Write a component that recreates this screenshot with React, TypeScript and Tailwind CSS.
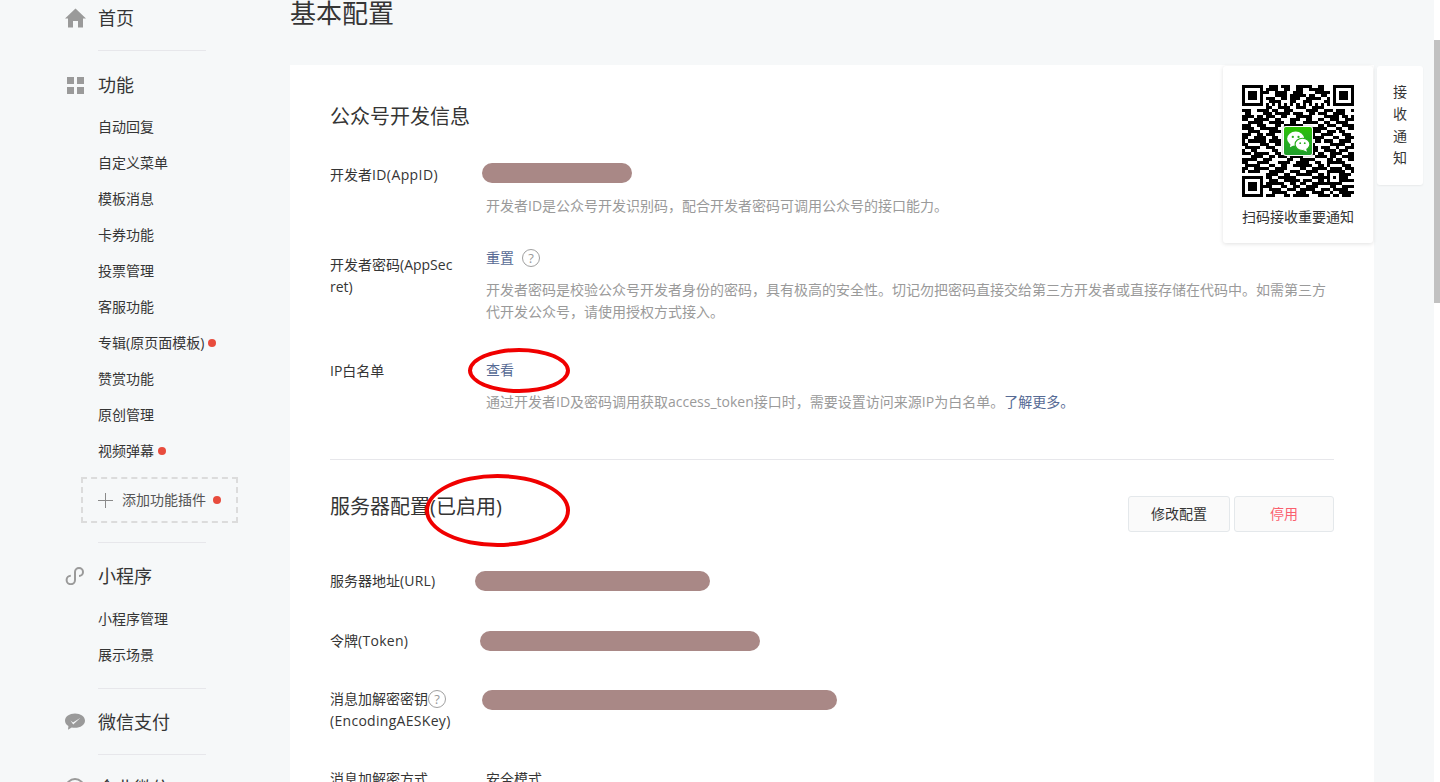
const FONT = 'font-["Open_Sans","Noto_Sans_CJK_SC",sans-serif]';

// rough copy of the QR pattern, 37 modules square
const QR_ROWS = [
  '1111111001110111001111100110001111111',
  '1000001011110011001100111110001000001',
  '1011101110011110011100001111101011101',
  '1011101000011110111110110011001011101',
  '1011101011100110111001111100101011101',
  '1000001001111000110011100001101000001',
  '1111111010101010101010101010101111111',
  '0000000011001111001110011110000000000',
  '1110011110110011100001111001110111001',
  '0110000111011111011100110111001111000',
  '1111011011100110001111100001111101101',
  '1100111110011000111001100110011100111',
  '0011111001111100110011111001100111100',
  '1110011100011011111100000110111001111',
  '1111001111110000000000011111000110011',
  '0011110001111000000000111100111011000',
  '1110011011100000000000010011110001110',
  '1100111100110000000000111110001100111',
  '1011111101111000000000001101110011110',
  '1100001110011000000000110000011111001',
  '0111110011100000000000011011100100111',
  '1001100000110000000000111001111011100',
  '1110111110011000000000110110011110011',
  '0001111001101110111100001111011001111',
  '1111100111000001100111110000110110011',
  '1100011110001111001111001100111111000',
  '0111110001100110011111100110100001110',
  '1100111110011110000110011111011110111',
  '1011110001111100111001111000111111001',
  '0000000011110011001111100110100011110',
  '1111111011001111110000011111101011100',
  '1000001001110011111011100110100011111',
  '1011101011111100110110011111111110000',
  '1011101111000110011001111000011001111',
  '1011101001111001110111110011101111100',
  '1000001000111110001110011110010011111',
  '1111111011100011011111000111101101110',
];

function QrCode() {
  return (
    <div className="relative w-[112px] h-[112px]">
      <svg width="112" height="112" viewBox="0 0 37 37" shapeRendering="crispEdges">
        {QR_ROWS.map((row, y) =>
          row.split('').map((c, x) =>
            c === '1' ? <rect key={`${x}-${y}`} x={x} y={y} width="1" height="1" fill="#000" /> : null
          )
        )}
      </svg>
      <div className="absolute left-[41px] top-[41px] w-[30px] h-[30px] rounded-[3px] bg-white shadow-[0_0_2px_rgba(0,0,0,0.4)] flex items-center justify-center">
        <div className="w-[28px] h-[28px] rounded-[2px] bg-gradient-to-b from-[#2dc100] to-[#1f9e2a] flex items-center justify-center">
          <svg width="25" height="23" viewBox="0 0 22 20">
            <ellipse cx="8.5" cy="7.5" rx="7.5" ry="6.2" fill="#fff" />
            <path d="M4 11.5 L3.5 15 L7.5 13 Z" fill="#fff" />
            <ellipse cx="14.5" cy="12.5" rx="6.5" ry="5.4" fill="#fff" stroke="#28b01c" />
            <path d="M17.5 16 L18.5 19 L15 17.5 Z" fill="#fff" />
            <circle cx="6" cy="6" r="1" fill="#28b01c" />
            <circle cx="11" cy="6" r="1" fill="#28b01c" />
            <circle cx="12.5" cy="11.5" r="0.8" fill="#28b01c" />
            <circle cx="16.5" cy="11.5" r="0.8" fill="#28b01c" />
          </svg>
        </div>
      </div>
    </div>
  );
}

function HomeIcon() {
  return (
    <svg width="21" height="20" viewBox="0 0 21 20">
      <path d="M10.5 0.5 L21 10.5 L18 10.5 L18 19.5 L13 19.5 L13 13 L8 13 L8 19.5 L3 19.5 L3 10.5 L0 10.5 Z" fill="#9a9a9a" />
    </svg>
  );
}

function GridIcon() {
  return (
    <div className="ml-[2px] grid grid-cols-2 gap-[3px]">
      <span className="w-[7px] h-[7px] bg-[#9a9a9a]" />
      <span className="w-[7px] h-[7px] bg-[#9a9a9a]" />
      <span className="w-[7px] h-[7px] bg-[#9a9a9a]" />
      <span className="w-[7px] h-[7px] bg-[#9a9a9a]" />
    </div>
  );
}

function MiniProgramIcon() {
  return (
    <svg width="20" height="18" viewBox="0 0 20 18" fill="none" stroke="#9a9a9a" strokeWidth="2">
      <path d="M10 7 V13 A4.2 4.2 0 1 1 5.8 8.8" />
      <path d="M10 11 V5 A4 4 0 1 1 14 9" />
    </svg>
  );
}

function PayIcon() {
  return (
    <svg width="20" height="18" viewBox="0 0 20 18">
      <path d="M10 0.5 C15.5 0.5 20 3.6 20 7.7 C20 11.8 15.5 14.8 10 14.8 C8.8 14.8 7.7 14.7 6.7 14.4 L3 16.8 L3.4 13 C1.3 11.7 0 9.8 0 7.7 C0 3.6 4.5 0.5 10 0.5 Z" fill="#9a9a9a" />
      <path d="M5.5 7.5 L8 9.5 L15.5 4.8 L8.2 11.6 Z" fill="#f6f8f9" />
    </svg>
  );
}

function RingIcon() {
  return <span className="block w-[20px] h-[20px] rounded-full border-2 border-[#9a9a9a]" />;
}

function NavTitle({ icon, label }: { icon: React.ReactNode; label: string }) {
  return (
    <div className="flex items-center h-9">
      <div className="w-[33px] ml-[-33px] flex justify-start">{icon}</div>
      <span className="text-[18px] text-[#353535]">{label}</span>
    </div>
  );
}

function NavItem({ label, dot }: { label: string; dot?: boolean }) {
  return (
    <div className="flex items-center h-9 text-sm text-[#353535]">
      <span>{label}</span>
      {dot && <span className="ml-1 w-2 h-2 rounded-full bg-[#e84c3d]" />}
    </div>
  );
}

function Divider() {
  return <div className="w-[108px] h-px bg-[#e7e7eb]" />;
}

function Sidebar() {
  return (
    <aside className="w-[290px] shrink-0 pl-[98px]">
      <NavTitle icon={<HomeIcon />} label="首页" />
      <div className="mt-[14px]"><Divider /></div>
      <div className="mt-4"><NavTitle icon={<GridIcon />} label="功能" /></div>
      <div className="mt-[6px]">
        <NavItem label="自动回复" />
        <NavItem label="自定义菜单" />
        <NavItem label="模板消息" />
        <NavItem label="卡券功能" />
        <NavItem label="投票管理" />
        <NavItem label="客服功能" />
        <NavItem label="专辑(原页面模板)" dot />
        <NavItem label="赞赏功能" />
        <NavItem label="原创管理" />
        <NavItem label="视频弹幕" dot />
      </div>
      <div className="mt-2 ml-[-17px] w-[157px] h-[46px] border-2 border-dashed border-[#dcdcdc] flex items-center pl-[15px] text-sm text-[#555]">
        <svg width="15" height="15" viewBox="0 0 15 15" stroke="#8a8a8a" strokeWidth="1">
          <path d="M7.5 0 V15 M0 7.5 H15" />
        </svg>
        <span className="ml-[9px]">添加功能插件</span>
        <span className="ml-[7px] w-2 h-2 rounded-full bg-[#e84c3d]" />
      </div>
      <div className="mt-[19px]"><Divider /></div>
      <div className="mt-[15px]"><NavTitle icon={<MiniProgramIcon />} label="小程序" /></div>
      <div className="mt-[7px]">
        <NavItem label="小程序管理" />
        <NavItem label="展示场景" />
      </div>
      <div className="mt-[15px]"><Divider /></div>
      <div className="mt-[15px]"><NavTitle icon={<PayIcon />} label="微信支付" /></div>
      <div className="mt-[14px]"><Divider /></div>
      <div className="mt-[15px]"><NavTitle icon={<RingIcon />} label="企业微信" /></div>
    </aside>
  );
}

function Redacted({ className }: { className: string }) {
  return <div className={`h-5 rounded-full bg-[#a98886] ${className}`} />;
}

function Help() {
  return (
    <span className="inline-flex items-center justify-center w-[18px] h-[18px] rounded-full border border-[#a0a0a0] text-[13px] leading-none text-[#9a9a9a]">
      ?
    </span>
  );
}

function App() {
  return (
    <div className={`relative w-[1440px] h-[782px] overflow-hidden flex bg-[#f6f8f9] ${FONT}`}>
      <Sidebar />

      <main className="w-[1084px] shrink-0">
        <h1 className="mt-[-5px] h-9 text-[26px] leading-9 font-normal text-[#353535]">基本配置</h1>

        <div className="relative mt-[34px] h-[900px] bg-white px-10 pt-[38px]">
          <h2 className="text-[20px] leading-7 font-normal text-[#353535]">公众号开发信息</h2>

          <div className="mt-8 flex text-sm leading-[22px]">
            <div className="w-[156px] shrink-0 pt-px text-[#353535]">
              开发者<span className="tracking-[0.4px]">ID(AppID)</span>
            </div>
            <div className="flex-1">
              <Redacted className="w-[150px] ml-[-4px] mb-[2px]" />
              <p className="mt-3 text-[#9a9a9a]">开发者ID是公众号开发识别码，配合开发者密码可调用公众号的接口能力。</p>
            </div>
          </div>

          <div className="mt-[30px] flex text-sm leading-[22px]">
            <div className="w-[156px] shrink-0 pt-[7px] pr-[29px] break-all text-[#353535]">开发者密码(AppSecret)</div>
            <div className="flex-1">
              <div className="flex items-center gap-2">
                <span className="text-[#576b95]">重置</span>
                <Help />
              </div>
              <p className="mt-[10px] text-[#9a9a9a]">开发者密码是校验公众号开发者身份的密码，具有极高的安全性。切记勿把密码直接交给第三方开发者或直接存储在代码中。如需第三方代开发公众号，请使用授权方式接入。</p>
            </div>
          </div>

          <div className="mt-9 flex text-sm leading-[22px]">
            <div className="w-[156px] shrink-0 pt-px text-[#353535]">IP白名单</div>
            <div className="flex-1">
              <span className="text-[#576b95]">查看</span>
              <p className="mt-[10px] text-[#9a9a9a]">
                通过开发者ID及密码调用获取access_token接口时，需要设置访问来源IP为白名单。<span className="text-[#576b95]">了解更多。</span>
              </p>
            </div>
          </div>

          <div className="mt-[46px] h-px bg-[#e7e7eb]" />

          <div className="mt-[33px] flex justify-between items-start">
            <h2 className="text-[20px] leading-7 font-normal text-[#353535]">服务器配置(已启用)</h2>
            <div className="mt-[3px] flex gap-1 text-sm">
              <button className="w-[102px] h-9 rounded-[3px] border border-[#e4e8eb] bg-[#fafafa] text-[#353535]">修改配置</button>
              <button className="w-[100px] h-9 rounded-[3px] border border-[#e4e8eb] bg-[#fafafa] text-[#fa5f6e]">停用</button>
            </div>
          </div>

          <div className="mt-[38px] flex items-center text-sm leading-[22px] text-[#353535]">
            <div className="w-[156px] shrink-0">
              服务器地址<span className="tracking-[0.2px]">(URL)</span>
            </div>
            <Redacted className="w-[235px] ml-[-11px]" />
          </div>

          <div className="mt-[38px] flex items-center text-sm leading-[22px] text-[#353535]">
            <div className="w-[156px] shrink-0">
              令牌<span className="tracking-[0.3px]">(Token)</span>
            </div>
            <Redacted className="w-[280px] ml-[-6px]" />
          </div>

          <div className="mt-9 flex text-sm leading-[22px] text-[#353535]">
            <div className="w-[156px] shrink-0">
              <div className="flex items-center">
                消息加解密密钥
                <Help />
              </div>
              <div className="tracking-[0.3px]">(EncodingAESKey)</div>
            </div>
            <Redacted className="w-[355px] ml-[-4px] mt-[2px]" />
          </div>

          <div className="mt-9 flex text-sm leading-[22px] text-[#353535]">
            <div className="w-[156px] shrink-0">消息加解密方式</div>
            <div>安全模式</div>
          </div>

          {/* hand drawn marks on the screenshot */}
          <div className="absolute left-[178px] top-[283px] w-[102px] h-[45px] rounded-[50%] border-4 border-[#f00000]" />
          <div className="absolute left-[135px] top-[409px] w-[145px] h-[73px] rounded-[50%] border-4 border-[#f00000]" />
        </div>
      </main>

      {/* scrollbar */}
      <div className="ml-auto w-[6px] bg-white">
        <div className="mt-10 h-[263px] bg-[#c1c1c1]" />
      </div>

      {/* QR popover */}
      <div className="absolute left-[1223px] top-[66px] w-[150px] h-[177px] rounded-[3px] bg-white shadow-[0_1px_4px_rgba(0,0,0,0.12)] pt-[19px] flex flex-col items-center">
        <QrCode />
        <div className="mt-[9px] text-sm leading-[22px] text-[#353535] whitespace-nowrap">扫码接收重要通知</div>
      </div>

      {/* notify tab */}
      <div className="absolute left-[1377px] top-[66px] w-[46px] h-[119px] rounded-[3px] bg-white shadow-[0_1px_2px_rgba(0,0,0,0.06)] pt-[15px] flex flex-col items-center text-sm leading-[22px] text-[#353535]">
        <span>接</span>
        <span>收</span>
        <span>通</span>
        <span>知</span>
      </div>
    </div>
  );
}

export default App;
